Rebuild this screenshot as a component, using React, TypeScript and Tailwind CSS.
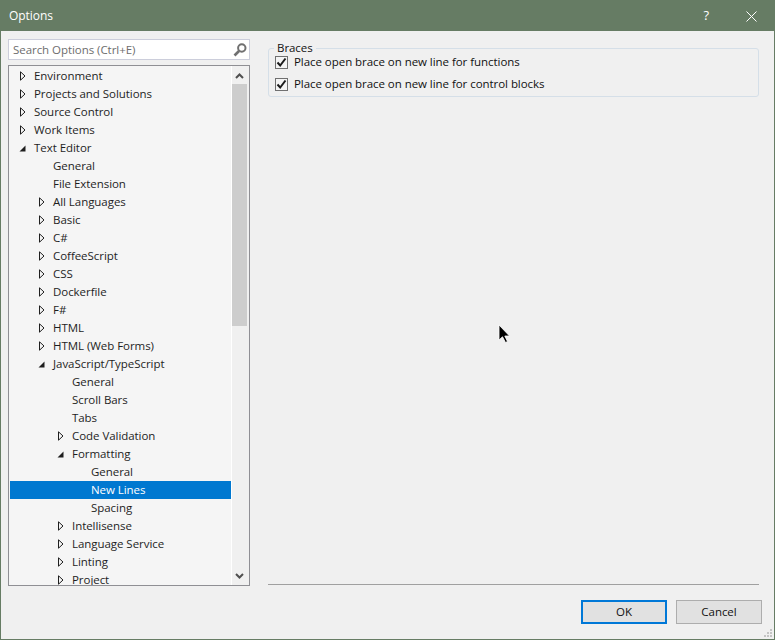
type Row = { label: string; level: number; arrow?: "closed" | "open"; selected?: boolean };

const rows: Row[] = [
  { label: "Environment", level: 0, arrow: "closed" },
  { label: "Projects and Solutions", level: 0, arrow: "closed" },
  { label: "Source Control", level: 0, arrow: "closed" },
  { label: "Work Items", level: 0, arrow: "closed" },
  { label: "Text Editor", level: 0, arrow: "open" },
  { label: "General", level: 1 },
  { label: "File Extension", level: 1 },
  { label: "All Languages", level: 1, arrow: "closed" },
  { label: "Basic", level: 1, arrow: "closed" },
  { label: "C#", level: 1, arrow: "closed" },
  { label: "CoffeeScript", level: 1, arrow: "closed" },
  { label: "CSS", level: 1, arrow: "closed" },
  { label: "Dockerfile", level: 1, arrow: "closed" },
  { label: "F#", level: 1, arrow: "closed" },
  { label: "HTML", level: 1, arrow: "closed" },
  { label: "HTML (Web Forms)", level: 1, arrow: "closed" },
  { label: "JavaScript/TypeScript", level: 1, arrow: "open" },
  { label: "General", level: 2 },
  { label: "Scroll Bars", level: 2 },
  { label: "Tabs", level: 2 },
  { label: "Code Validation", level: 2, arrow: "closed" },
  { label: "Formatting", level: 2, arrow: "open" },
  { label: "General", level: 3 },
  { label: "New Lines", level: 3, selected: true },
  { label: "Spacing", level: 3 },
  { label: "Intellisense", level: 2, arrow: "closed" },
  { label: "Language Service", level: 2, arrow: "closed" },
  { label: "Linting", level: 2, arrow: "closed" },
  { label: "Project", level: 2, arrow: "closed" },
];

function Arrow({ kind }: { kind: "closed" | "open" }) {
  if (kind === "open") {
    return (
      <svg width="7" height="7" viewBox="0 0 7 7" className="shrink-0">
        <path d="M6.5 0.5V6.5H0.5Z" fill="#1e1e1e" />
      </svg>
    );
  }
  return (
    <svg width="6" height="10" viewBox="0 0 6 10" className="ml-px shrink-0">
      <path d="M0.5 0.8L5 5L0.5 9.2Z" fill="#f5f5f5" stroke="#1e1e1e" />
    </svg>
  );
}

function TreeRow({ row }: { row: Row }) {
  const pad = ["pl-[9px]", "pl-[28px]", "pl-[47px]", "pl-[66px]"][row.level];
  return (
    <div
      className={`flex h-[18px] shrink-0 items-center ${pad} ${
        row.selected ? "bg-[#0078d0] text-white" : "text-[#1e1e1e]"
      }`}
    >
      <span className="flex w-[15px] shrink-0 items-center">
        {row.arrow && <Arrow kind={row.arrow} />}
      </span>
      <span className="whitespace-nowrap">{row.label}</span>
    </div>
  );
}

function CheckRow({ label }: { label: string }) {
  return (
    <label className="flex h-[22px] items-center gap-[6px]">
      <span className="flex size-[13px] items-center justify-center border border-[#707070] bg-[#f4f4f4]">
        <svg width="11" height="11" viewBox="0 0 11 11">
          <path d="M1.5 5.5L4.2 8.5L9.5 1.5" fill="none" stroke="#1a1a1a" strokeWidth="2" />
        </svg>
      </span>
      <span className="text-[#111111]">{label}</span>
    </label>
  );
}

export default function App() {
  return (
    <div className="relative flex h-[640px] w-[775px] flex-col border border-[#667c64] bg-[#f0f0f0] font-['Open_Sans','Liberation_Sans',sans-serif] text-[11.5px] tracking-[-0.05px]">
      <div className="flex h-[30px] shrink-0 items-center justify-between bg-[#667c64] pl-[8px] text-[12px] text-white">
        <span>Options</span>
        <div className="flex items-center">
          <span className="mr-[37px] text-[13px]">?</span>
          <svg width="11" height="11" viewBox="0 0 11 11" className="mr-[17px]">
            <path d="M0.5 0.5L10.5 10.5M10.5 0.5L0.5 10.5" stroke="white" />
          </svg>
        </div>
      </div>

      <div className="flex min-h-0 flex-1">
        <div className="ml-[7px] mt-[8px] flex w-[242px] shrink-0 flex-col">
          <div className="flex h-[21px] shrink-0 items-center justify-between border border-[#cccedb] bg-white pl-[4px] pr-[2px] text-[#6d6d6d]">
            <span>Search Options (Ctrl+E)</span>
            <svg width="14" height="14" viewBox="0 0 14 14">
              <circle cx="8.8" cy="5" r="3.7" fill="none" stroke="#707070" strokeWidth="2" />
              <path d="M6 8L1.5 12.5" stroke="#707070" strokeWidth="2.6" />
            </svg>
          </div>
          <div className="mt-[5px] flex h-[521px] shrink-0 overflow-hidden border border-[#8f8f94] bg-[#f5f5f5]">
            <div className="flex min-w-0 flex-1 flex-col overflow-hidden pl-px pt-px">
              {rows.map((row, i) => (
                <TreeRow key={i} row={row} />
              ))}
            </div>
            <div className="flex w-[18px] shrink-0 flex-col border-l border-white bg-[#f0f0f0]">
              <div className="flex h-[18px] w-[14px] shrink-0 items-center justify-center pt-px">
                <svg width="9" height="6" viewBox="0 0 9 6">
                  <path d="M1 5L4.5 1.5L8 5" fill="none" stroke="#505050" strokeWidth="2" />
                </svg>
              </div>
              <div className="h-[242px] w-[15px] shrink-0 bg-[#cdcdcd]" />
              <div className="flex-1" />
              <div className="flex h-[18px] w-[14px] shrink-0 items-center justify-center">
                <svg width="9" height="6" viewBox="0 0 9 6">
                  <path d="M1 1L4.5 4.5L8 1" fill="none" stroke="#505050" strokeWidth="2" />
                </svg>
              </div>
            </div>
          </div>
        </div>

        <div className="ml-[18px] flex w-[491px] flex-col pt-[17px]">
          <div className="flex h-[49px] shrink-0 flex-col rounded-[3px] border border-[#d5dfe8] pl-[6px] pt-[2px]">
            <CheckRow label="Place open brace on new line for functions" />
            <CheckRow label="Place open brace on new line for control blocks" />
          </div>
          <div className="mt-auto mb-[54px] h-px bg-[#a0a0a0]" />
        </div>
      </div>

      <div className="absolute left-[273px] top-[40px] bg-[#f0f0f0] px-[3px] leading-[14px] text-[#111111]">
        Braces
      </div>

      <div className="absolute bottom-[15px] right-[12px] flex gap-[9px]">
        <button className="h-[24px] w-[86px] border-2 border-[#0078d7] bg-[#e1e1e1] text-[#111111]">OK</button>
        <button className="h-[24px] w-[86px] border border-[#adadad] bg-[#e1e1e1] text-[#111111]">Cancel</button>
      </div>

      <svg width="10" height="10" viewBox="0 0 10 10" className="absolute bottom-px right-px">
        <path d="M7 1h2v2H7zM4 4h2v2H4zM7 4h2v2H7zM1 7h2v2H1zM4 7h2v2H4zM7 7h2v2H7z" fill="#c4c4c4" />
      </svg>

      <svg width="13" height="20" viewBox="0 0 13 20" className="absolute left-[497px] top-[323px]">
        <path d="M1 1V16L4.5 12.8L7.5 18.5L9.5 17.5L6.8 12H11.5Z" fill="#000" stroke="#fff" strokeWidth="0.8" />
      </svg>
    </div>
  );
}
